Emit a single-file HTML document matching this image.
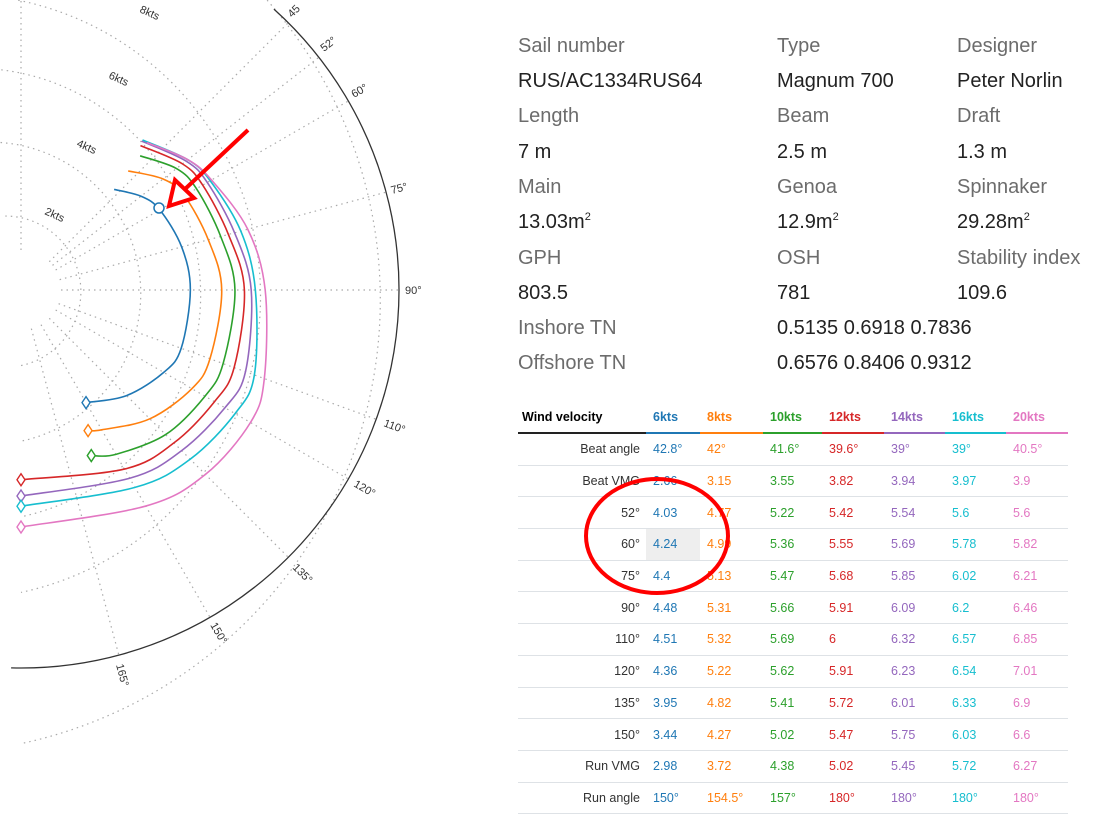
<!DOCTYPE html>
<html><head><meta charset="utf-8">
<style>
html,body{margin:0;padding:0;background:#fff;width:1109px;height:800px;overflow:hidden;font-family:"Liberation Sans",sans-serif}
#chart{position:absolute;left:0;top:0}
.info{position:absolute;font-size:20px;line-height:20px;white-space:nowrap}
.l{color:#6c6c6c}.v{color:#222}
sup{font-size:11px;vertical-align:8px;line-height:0}
table{position:absolute;left:518px;top:401px;border-collapse:collapse;font-size:12.5px;width:550px}
th{font-weight:bold;text-align:left;height:31px;padding:0 0 0 7px;border-bottom:2px solid #222}
th.f{padding:0 0 0 4px}
td{height:30.7px;padding:0 0 0 7px;border-bottom:1px solid #dee2e6}
td.h{text-align:right;color:#333;padding:0 6px 0 0}
.c0{color:#1f77b4}.c1{color:#ff7f0e}.c2{color:#2ca02c}.c3{color:#d62728}.c4{color:#9467bd}.c5{color:#17becf}.c6{color:#e377c2}
</style></head><body>
<svg id="chart" width="500" height="800" viewBox="0 0 500 800">
<g id="grid" fill="none" stroke="#aaa" stroke-width="1.2" stroke-dasharray="1.5 4"></g>
<path id="outer" fill="none" stroke="#333" stroke-width="1.3"/>
<g font-size="11" fill="#333" font-family="Liberation Sans, sans-serif">
<text transform="translate(139,12) rotate(24)">8kts</text>
<text transform="translate(108,78) rotate(24)">6kts</text>
<text transform="translate(76,146) rotate(24)">4kts</text>
<text transform="translate(44,214) rotate(24)">2kts</text>
<text transform="translate(292,18) rotate(-45)">45</text>
<text transform="translate(324,52) rotate(-38)">52°</text>
<text transform="translate(354,98) rotate(-30)">60°</text>
<text transform="translate(392,194) rotate(-15)">75°</text>
<text transform="translate(405,294)">90°</text>
<text transform="translate(383,426) rotate(20)">110°</text>
<text transform="translate(353,486) rotate(30)">120°</text>
<text transform="translate(292,568) rotate(45)">135°</text>
<text transform="translate(210,625) rotate(60)">150°</text>
<text transform="translate(116,665) rotate(75)">165°</text>
</g>
<g id="curves" fill="none" stroke-width="1.6"></g>
<circle cx="159" cy="208" r="5" fill="#fff" stroke="#1f77b4" stroke-width="1.5"/>
<line x1="248" y1="130" x2="184" y2="190" stroke="red" stroke-width="4"/>
<path d="M169,206 L175,180 L194,198 Z" fill="#fff" stroke="red" stroke-width="4" stroke-linejoin="miter"/>
</svg>

<div class="info l" style="left:518px;top:36px">Sail number</div>
<div class="info l" style="left:777px;top:36px">Type</div>
<div class="info l" style="left:957px;top:36px">Designer</div>
<div class="info v" style="left:518px;top:71px">RUS/AC1334RUS64</div>
<div class="info v" style="left:777px;top:71px">Magnum 700</div>
<div class="info v" style="left:957px;top:71px">Peter Norlin</div>
<div class="info l" style="left:518px;top:106px">Length</div>
<div class="info l" style="left:777px;top:106px">Beam</div>
<div class="info l" style="left:957px;top:106px">Draft</div>
<div class="info v" style="left:518px;top:142px">7 m</div>
<div class="info v" style="left:777px;top:142px">2.5 m</div>
<div class="info v" style="left:957px;top:142px">1.3 m</div>
<div class="info l" style="left:518px;top:177px">Main</div>
<div class="info l" style="left:777px;top:177px">Genoa</div>
<div class="info l" style="left:957px;top:177px">Spinnaker</div>
<div class="info v" style="left:518px;top:212px">13.03m<sup>2</sup></div>
<div class="info v" style="left:777px;top:212px">12.9m<sup>2</sup></div>
<div class="info v" style="left:957px;top:212px">29.28m<sup>2</sup></div>
<div class="info l" style="left:518px;top:248px">GPH</div>
<div class="info l" style="left:777px;top:248px">OSH</div>
<div class="info l" style="left:957px;top:248px">Stability index</div>
<div class="info v" style="left:518px;top:283px">803.5</div>
<div class="info v" style="left:777px;top:283px">781</div>
<div class="info v" style="left:957px;top:283px">109.6</div>
<div class="info l" style="left:518px;top:318px">Inshore TN</div>
<div class="info v" style="left:777px;top:318px">0.5135 0.6918 0.7836</div>
<div class="info l" style="left:518px;top:353px">Offshore TN</div>
<div class="info v" style="left:777px;top:353px">0.6576 0.8406 0.9312</div>

<table>
<colgroup><col style="width:128px"><col style="width:54px"><col style="width:63px"><col style="width:59px"><col style="width:62px"><col style="width:61px"><col style="width:61px"><col style="width:62px"></colgroup>
<tr><th class="f">Wind velocity</th><th class="c0" style="border-color:#1f77b4">6kts</th><th class="c1" style="border-color:#ff7f0e">8kts</th><th class="c2" style="border-color:#2ca02c">10kts</th><th class="c3" style="border-color:#d62728">12kts</th><th class="c4" style="border-color:#9467bd">14kts</th><th class="c5" style="border-color:#17becf">16kts</th><th class="c6" style="border-color:#e377c2">20kts</th></tr>
<tr><td class="h">Beat angle</td><td class="c0">42.8°</td><td class="c1">42°</td><td class="c2">41.6°</td><td class="c3">39.6°</td><td class="c4">39°</td><td class="c5">39°</td><td class="c6">40.5°</td></tr>
<tr><td class="h">Beat VMG</td><td class="c0">2.66</td><td class="c1">3.15</td><td class="c2">3.55</td><td class="c3">3.82</td><td class="c4">3.94</td><td class="c5">3.97</td><td class="c6">3.9</td></tr>
<tr><td class="h">52°</td><td class="c0">4.03</td><td class="c1">4.77</td><td class="c2">5.22</td><td class="c3">5.42</td><td class="c4">5.54</td><td class="c5">5.6</td><td class="c6">5.6</td></tr>
<tr><td class="h">60°</td><td class="c0" style="background:#eee">4.24</td><td class="c1">4.99</td><td class="c2">5.36</td><td class="c3">5.55</td><td class="c4">5.69</td><td class="c5">5.78</td><td class="c6">5.82</td></tr>
<tr><td class="h">75°</td><td class="c0">4.4</td><td class="c1">5.13</td><td class="c2">5.47</td><td class="c3">5.68</td><td class="c4">5.85</td><td class="c5">6.02</td><td class="c6">6.21</td></tr>
<tr><td class="h">90°</td><td class="c0">4.48</td><td class="c1">5.31</td><td class="c2">5.66</td><td class="c3">5.91</td><td class="c4">6.09</td><td class="c5">6.2</td><td class="c6">6.46</td></tr>
<tr><td class="h">110°</td><td class="c0">4.51</td><td class="c1">5.32</td><td class="c2">5.69</td><td class="c3">6</td><td class="c4">6.32</td><td class="c5">6.57</td><td class="c6">6.85</td></tr>
<tr><td class="h">120°</td><td class="c0">4.36</td><td class="c1">5.22</td><td class="c2">5.62</td><td class="c3">5.91</td><td class="c4">6.23</td><td class="c5">6.54</td><td class="c6">7.01</td></tr>
<tr><td class="h">135°</td><td class="c0">3.95</td><td class="c1">4.82</td><td class="c2">5.41</td><td class="c3">5.72</td><td class="c4">6.01</td><td class="c5">6.33</td><td class="c6">6.9</td></tr>
<tr><td class="h">150°</td><td class="c0">3.44</td><td class="c1">4.27</td><td class="c2">5.02</td><td class="c3">5.47</td><td class="c4">5.75</td><td class="c5">6.03</td><td class="c6">6.6</td></tr>
<tr><td class="h">Run VMG</td><td class="c0">2.98</td><td class="c1">3.72</td><td class="c2">4.38</td><td class="c3">5.02</td><td class="c4">5.45</td><td class="c5">5.72</td><td class="c6">6.27</td></tr>
<tr><td class="h">Run angle</td><td class="c0">150°</td><td class="c1">154.5°</td><td class="c2">157°</td><td class="c3">180°</td><td class="c4">180°</td><td class="c5">180°</td><td class="c6">180°</td></tr>
</table>

<svg width="1109" height="800" style="position:absolute;left:0;top:0;pointer-events:none">
<ellipse cx="657" cy="536" rx="71" ry="57" fill="none" stroke="red" stroke-width="4"/>
</svg>

<script>
(function(){
var NS="http://www.w3.org/2000/svg",cx=21,cy=290,k=37.8;
function P(a,r){var t=a*Math.PI/180;return [cx+r*Math.sin(t),cy-r*Math.cos(t)];}
function mk(tag,at,par){var e=document.createElementNS(NS,tag);for(var i in at)e.setAttribute(i,at[i]);par.appendChild(e);return e;}
var g=document.getElementById('grid');
[2,4,6,8,12].forEach(function(s){var r=s*k,a=P(-12,r),b=P(180,r);
 mk('path',{d:'M'+a+' A'+r+','+r+' 0 0 1 '+b},g);});
[0,45,52,60,75,90,110,120,135,150,165].forEach(function(a){var p=P(a,40),q=P(a,10*k);
 mk('line',{x1:p[0],y1:p[1],x2:q[0],y2:q[1]},g);});
var a1=P(181.5,10*k);
document.getElementById('outer').setAttribute('d','M'+P(42,10*k)+' A'+(10*k)+','+(10*k)+' 0 0 1 '+a1);
var cols=['#1f77b4','#ff7f0e','#2ca02c','#d62728','#9467bd','#17becf','#e377c2'];
var beatA=[42.8,42,41.6,39.6,39,39,40.5],beatV=[2.66,3.15,3.55,3.82,3.94,3.97,3.9];
var runA=[150,154.5,157,180,180,180,180],runV=[2.98,3.72,4.38,5.02,5.45,5.72,6.27];
var ang=[52,60,75,90,110,120,135,150];
var sp=[[4.03,4.77,5.22,5.42,5.54,5.6,5.6],[4.24,4.99,5.36,5.55,5.69,5.78,5.82],[4.4,5.13,5.47,5.68,5.85,6.02,6.21],[4.48,5.31,5.66,5.91,6.09,6.2,6.46],[4.51,5.32,5.69,6,6.32,6.57,6.85],[4.36,5.22,5.62,5.91,6.23,6.54,7.01],[3.95,4.82,5.41,5.72,6.01,6.33,6.9],[3.44,4.27,5.02,5.47,5.75,6.03,6.6]];
var cv=document.getElementById('curves');
for(var i=0;i<7;i++){
 var pts=[P(beatA[i],beatV[i]/Math.cos(beatA[i]*Math.PI/180)*k)];
 for(var j=0;j<8;j++){ pts.push(P(ang[j],sp[j][i]*k)); }
 var rs=runV[i]/Math.cos((180-runA[i])*Math.PI/180);
 if(runA[i]>150) pts.push(P(runA[i],rs*k));
 var d='M'+pts[0];
 for(var m=0;m<pts.length-1;m++){
  var p0=pts[Math.max(0,m-1)],p1=pts[m],p2=pts[m+1],p3=pts[Math.min(pts.length-1,m+2)];
  var c1=[p1[0]+(p2[0]-p0[0])/6,p1[1]+(p2[1]-p0[1])/6],c2=[p2[0]-(p3[0]-p1[0])/6,p2[1]-(p3[1]-p1[1])/6];
  d+=' C'+c1+' '+c2+' '+p2;
 }
 mk('path',{d:d,stroke:cols[i]},cv);
 var e=pts[pts.length-1];
 mk('path',{d:'M'+(e[0]-4)+','+e[1]+' L'+e[0]+','+(e[1]-6)+' L'+(e[0]+4)+','+e[1]+' L'+e[0]+','+(e[1]+6)+' Z',fill:'#fff',stroke:cols[i],'stroke-width':1.4},cv);
}
})();
</script>
</body></html>
